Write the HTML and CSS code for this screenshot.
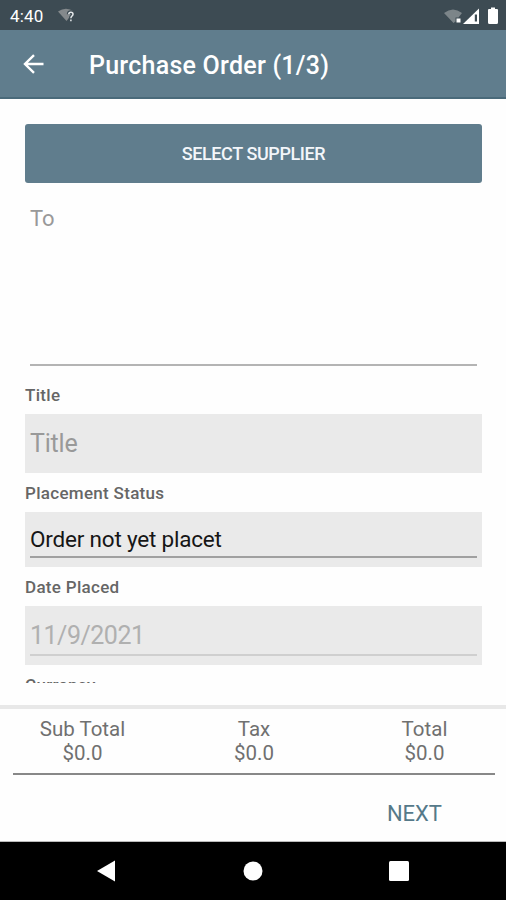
FILE: index.html
```
<!DOCTYPE html>
<html lang="en">
<head>
    <meta charset="UTF-8">
    <meta name="viewport" content="width=device-width, initial-scale=1.0">
    <title>Purchase Order</title>
    <link rel="stylesheet" href="styles.css">
</head>
<body>
<div class="status-bar">
    <span class="clock">4:40</span>
    <svg class="wifi-unknown" width="20" height="18" viewBox="0 0 20 18">
        <path d="M1 4.5Q9 -1 17 4.5L9.5 14Z" fill="#84898c"/>
        <path d="M11.8 7.2C11.8 4.6 16 4.6 16 7.2C16 9 13.9 9 13.9 11.2M13.9 12.5V14.3" fill="none" stroke="#3d4b53" stroke-width="4"/>
        <path d="M11.8 7.2C11.8 4.6 16 4.6 16 7.2C16 9 13.9 9 13.9 11.2M13.9 12.5V14.3" fill="none" stroke="#e4e8ea" stroke-width="1.5"/>
    </svg>
    <svg class="system-icons" width="58" height="20" viewBox="0 0 58 20">
        <path d="M1 6Q10 -1 19 6L15.5 10.500H12.500V14.500L10.500 16Z" fill="#7c8589"/>
        <rect x="13.500" y="11.500" width="4" height="4" fill="#fff"/>
        <path d="M20 17L36 1.500V17Z" fill="#fff"/>
        <path d="M31.800 7.500H34V14.500H31.800Z" fill="#3d4b53"/>
        <path d="M46 2H48V.500H52V2H54Q55 2 55 3V15.500Q55 17 53.500 17H46.500Q45 17 45 15.500V3Q45 2 46 2Z" fill="#fff"/>
    </svg>
</div>

<header class="app-bar">
    <svg class="back" width="22" height="20" viewBox="0 0 22 20">
        <path d="M20.500 10H2M11 1.200L2 10L11 18.800" fill="none" stroke="#fff" stroke-width="2.400"/>
    </svg>
    <h1>Purchase Order (1/3)</h1>
</header>

<main class="form">
    <button class="supplier-btn">SELECT SUPPLIER</button>
    <div class="to-field"><span>To</span></div>

    <div class="label">Title</div>
    <div class="field"><span class="hint">Title</span></div>

    <div class="label">Placement Status</div>
    <div class="field field-status"><span class="value">Order not yet placet</span></div>

    <div class="label">Date Placed</div>
    <div class="field field-date"><span class="date">11/9/2021</span></div>

    <div class="label">Currency</div>
</main>

<footer class="summary">
    <div class="totals">
        <div class="total"><span>Sub Total</span><span>$0.0</span></div>
        <div class="total"><span>Tax</span><span>$0.0</span></div>
        <div class="total"><span>Total</span><span>$0.0</span></div>
    </div>
    <div class="actions">
        <button class="next-btn">NEXT</button>
    </div>
</footer>

<nav class="nav-bar">
    <svg width="20" height="22" viewBox="0 0 20 22"><path d="M1 11L19 .500V21.500Z" fill="#fff"/></svg>
    <svg width="20" height="20" viewBox="0 0 20 20"><circle cx="10" cy="10" r="9.500" fill="#fff"/></svg>
    <svg width="20" height="20" viewBox="0 0 20 20"><rect width="20" height="20" rx="1.500" fill="#fff"/></svg>
</nav>
</body>
</html>
```
FILE: styles.css
```
* {
    box-sizing: border-box;
}

body {
    margin: 0;
    height: 900px;
    display: flex;
    flex-direction: column;
    overflow: hidden;
    background-color: #fefefe;
    font-family: Roboto, sans-serif;
}

button {
    border: none;
    padding: 0;
    font-family: inherit;
}

.status-bar {
    height: 30px;
    display: flex;
    align-items: center;
    padding: 2px 5px 0 10px;
    background-color: #3d4b53;
    color: #fff;
}

.clock {
    width: 47px;
    font-size: 17px;
    letter-spacing: 0.2px;
}

.system-icons {
    margin-left: auto;
    margin-top: 2px;
}

/* Toolbar */
.app-bar {
    height: 69px;
    display: flex;
    align-items: center;
    padding-left: 23px;
    background-color: #607d8d;
    border-bottom: 2px solid #4a6a7a;
    color: #fff;
}

.app-bar h1 {
    margin: 3px 0 0 44px;
    font-size: 25px;
    font-weight: 500;
    letter-spacing: 0.25px;
}

/* Scrolling form */
.form {
    height: 584px;
    padding: 25px 24px 0 25px;
    overflow: hidden;
}

.supplier-btn {
    display: block;
    width: 100%;
    height: 59px;
    border-radius: 3px;
    background-color: #607d8d;
    color: #f3f6fa;
    font-size: 18px;
    font-weight: 500;
    letter-spacing: -0.4px;
}

.to-field {
    height: 183px;
    margin: 0 5px;
    padding-top: 22px;
    border-bottom: 2px solid #b4b4b4;
    color: #999;
    font-size: 22px;
    line-height: 28px;
}

.label {
    height: 39px;
    padding-top: 10px;
    color: #666;
    font-size: 17px;
    font-weight: 500;
    line-height: 20px;
    letter-spacing: 0.3px;
}

.to-field + .label {
    height: 48px;
    padding-top: 19px;
}

.field {
    height: 59px;
    padding: 0 5px;
    background-color: #eaeaea;
    font-size: 25px;
    line-height: 60px;
}

.field span {
    display: block;
}

.hint {
    color: #999;
    letter-spacing: -0.2px;
}

.field-status {
    height: 55px;
    font-size: 22.5px;
    line-height: 55px;
    letter-spacing: -0.2px;
}

.value {
    height: 46px;
    border-bottom: 2px solid #a0a0a0;
    color: #161616;
}

.date {
    height: 50px;
    border-bottom: 2px solid #cfcfcf;
    color: #b0b0b0;
    letter-spacing: -0.5px;
}

/* Totals and paging */
.summary {
    height: 137px;
    margin-top: 22px;
    padding: 8px 11px 0 13px;
    border-top: 4px solid #e8e8e8;
    border-bottom: 1px solid #bbb;
}

.totals {
    display: grid;
    grid-template-columns: 139px 204px 137px;
    height: 58px;
    border-bottom: 2px solid #888;
}

.total {
    display: flex;
    flex-direction: column;
    text-align: center;
    color: #707070;
    font-size: 20.5px;
    line-height: 24px;
}

.actions {
    display: flex;
    justify-content: flex-end;
    padding: 25px 53px 0 0;
}

.next-btn {
    background: none;
    color: #557989;
    font-size: 22px;
    line-height: 28px;
}

.nav-bar {
    flex: 1;
    display: flex;
    justify-content: space-between;
    align-items: center;
    padding: 0 97px 0 96px;
    background-color: #000;
}
```
